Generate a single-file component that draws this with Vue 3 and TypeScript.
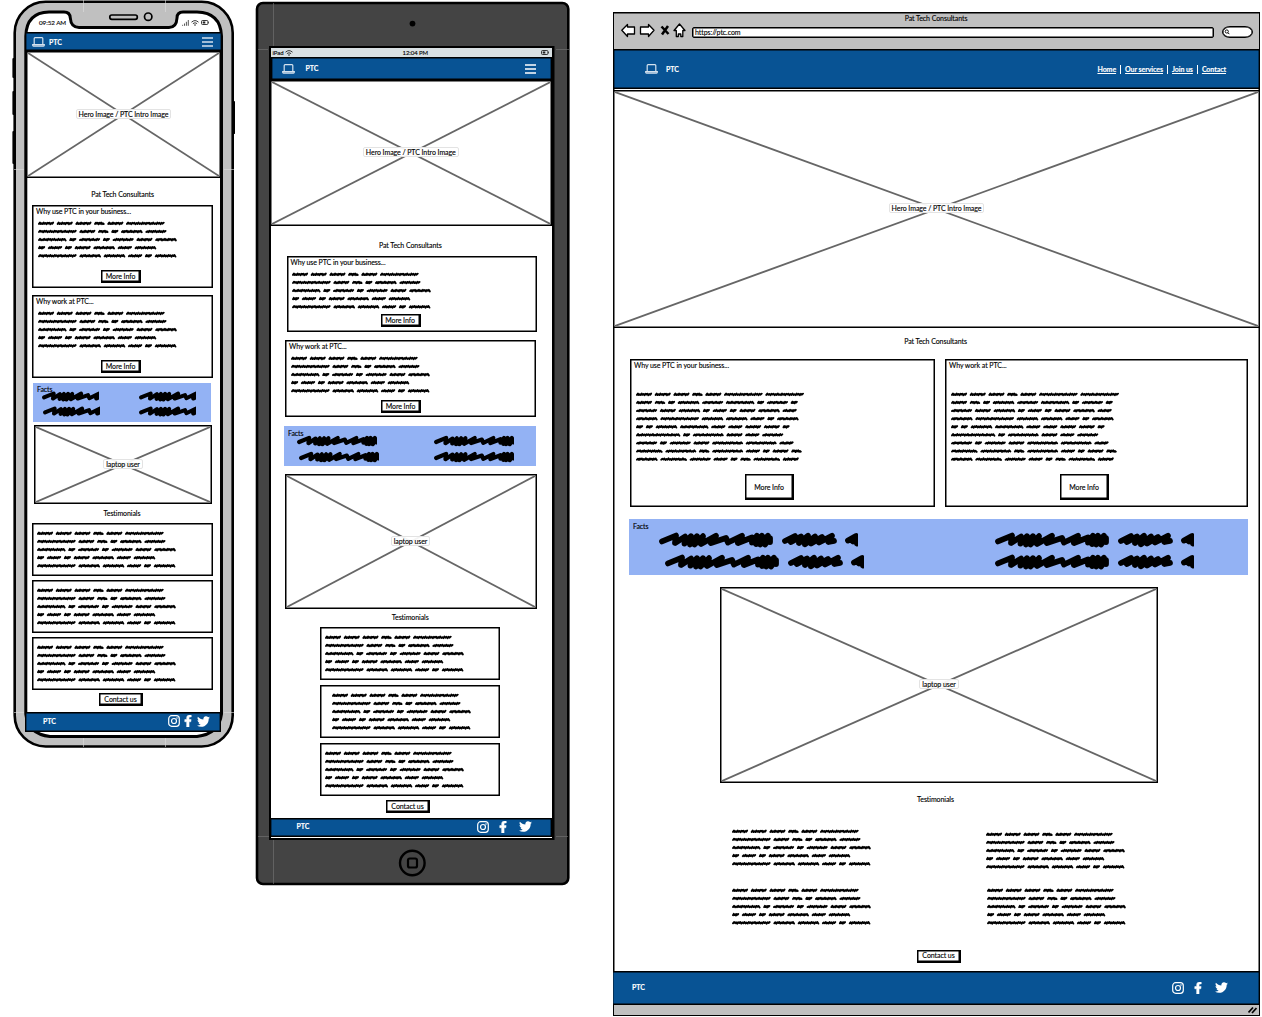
<script setup lang="ts">
type WordKey = 'A' | 'B' | 'C' | 'D' | 'E' | 'F' | 'G' | 'H' | 'I' | 'J' | 'K'

const wordWidths: Record<WordKey, number> = {
  A: 16.1, B: 10.6, C: 38.7, D: 7.2, E: 21.7, F: 21.2, G: 28.6, H: 14.4, I: 44.4, J: 31, K: 26.7,
}
const GAP = 2.6
const PITCH = 8.1

const shortCopy = ['AAABAC', 'CABDEF', 'GDFDFAE', 'DHDAEHE', 'CEEHDE']
const longCopy = [
  'AAABACC', 'ABDEFGDFD', 'FAEDHDAEH', 'ECEEHDE', 'DDEGHHAAD',
  'IDJAHF', 'FDFAJJH', 'KJBJHDAB', 'EKFHDBKA',
]

// Builds the squiggle strokes that stand in for body copy.
function scribble(lines: string[]): string {
  let d = ''
  lines.forEach((line, row) => {
    let x = 0
    const y = 3.4 + row * PITCH
    for (const key of line) {
      const w = wordWidths[key as WordKey]
      const steps = Math.max(4, Math.round(w / 1.1))
      const dx = (w - 2) / steps
      d += `M${(x + 1).toFixed(2)} ${(y + 0.5).toFixed(2)}`
      for (let i = 1; i <= steps; i++) {
        const amp = 0.1 + 0.75 * Math.abs(Math.sin(i * 0.9 + w))
        const dy = i % 2 ? -amp : amp
        d += `L${(x + 1 + dx * i).toFixed(2)} ${(y + dy).toFixed(2)}`
      }
      x += w + GAP
    }
  })
  return d
}

const shortPath = scribble(shortCopy)
const longPath = scribble(longCopy)

const factRows = [0, 1]
const testimonials = [0, 1, 2]
const links = ['Home', 'Our services', 'Join us', 'Contact']
const cards = ['Why use PTC in your business...', 'Why work at PTC...']
</script>

<template>
  <main class="canvas">
    <svg class="defs" width="0" height="0" aria-hidden="true">
      <symbol id="laptop" viewBox="0 0 13 10">
        <path d="M2.2 7V1.6q0-.9.9-.9h6.8q.9 0 .9.9V7M.7 7.6h11.6v.7q0 .8-.8.8h-10q-.8 0-.8-.8z" fill="none" stroke="#d5e2ee" stroke-width="1.2" />
      </symbol>
      <symbol id="instagram" viewBox="0 0 12 12">
        <rect x=".7" y=".7" width="10.6" height="10.6" rx="3" fill="none" stroke="#fff" stroke-width="1.2" />
        <circle cx="6" cy="6" r="2.5" fill="none" stroke="#fff" stroke-width="1.2" />
        <circle cx="9" cy="3" r=".75" fill="#fff" />
      </symbol>
      <symbol id="facebook" viewBox="0 0 320 512">
        <path fill="#fff" stroke="#fff" stroke-width="24" d="M279.14 288l14.22-92.66h-88.91v-60.13c0-25.35 12.42-50.06 52.24-50.06h40.42V6.26S260.43 0 225.36 0c-73.22 0-121.08 44.38-121.08 124.72v70.62H22.89V288h81.39v224h100.17V288z" />
      </symbol>
      <symbol id="twitter" viewBox="0 0 512 512">
        <path fill="#fff" d="M459.37 151.716c.325 4.548.325 9.097.325 13.645 0 138.72-105.583 298.558-298.558 298.558-59.452 0-114.68-17.219-161.137-47.106 8.447.974 16.568 1.299 25.34 1.299 49.055 0 94.213-16.568 130.274-44.832-46.132-.975-84.792-31.188-98.112-72.772 6.498.974 12.995 1.624 19.818 1.624 9.421 0 18.843-1.3 27.614-3.573-48.081-9.747-84.143-51.98-84.143-102.985v-1.299c13.969 7.797 30.214 12.67 47.431 13.319-28.264-18.843-46.781-51.005-46.781-87.391 0-19.492 5.197-37.36 14.294-52.954 51.655 63.675 129.3 105.258 216.365 109.807-1.624-7.797-2.599-15.918-2.599-24.04 0-57.828 46.782-104.934 104.934-104.934 30.213 0 57.502 12.67 76.67 33.137 23.715-4.548 46.456-13.32 66.599-25.34-7.798 24.366-24.366 44.833-46.132 57.827 21.117-2.273 41.584-8.122 60.426-16.243-14.292 20.791-32.161 39.308-52.628 54.253z" />
      </symbol>
      <symbol id="wifi" viewBox="0 0 8 6">
        <path d="M.5 2.2Q4-1 7.5 2.2M1.9 3.6q2.1-1.7 4.2 0" fill="none" stroke="#222" stroke-width=".9" />
        <circle cx="4" cy="5" r=".8" fill="#222" />
      </symbol>
      <symbol id="battery" viewBox="0 0 8 5">
        <rect x=".5" y=".5" width="6.4" height="4" rx="1" fill="none" stroke="#222" stroke-width=".9" />
        <path d="M1.7 1.5h2.6v2H1.7zM7.2 1.7h.7v1.6h-.7z" fill="#222" />
      </symbol>
      <symbol id="marker" viewBox="0 0 200 16" overflow="hidden">
        <path d="M3 9.400L17 3.600 16 11 26 4.600 25.500 11.500 32 4.200 31 12.500 38 4.200 35.500 12.500 44 4.200 42 12 57 3.800 52 11 67 6 69 10.500 83 3.800 79 11 93 5.500 93 10.500 98 3.800 97 12 103 3.800 101 12.500 109 3.800 106 12.500 111 6 111 10" />
        <path d="M126 9L136 4 132 10 142 4.500 140 11 149 3.800 146 12.300 156 4.500 152 11.500 163 5 160 10.500 173 3.800 169.500 10 175 9" />
        <path d="M189 8.500L197 4 194 9.500 200 6 198 11.500 202 10" />
      </symbol>
    </svg>

    <!-- Phone -->
    <section class="device phone">
      <svg class="shell" width="223" height="750" viewBox="12 0 223 750">
        <path d="M13.500 59v18M13.500 92v22M13.500 132v31M234 102v31" stroke="#000" stroke-width="2.200" stroke-linecap="round" />
        <rect x="14.700" y="1.800" width="218" height="744.700" rx="31" fill="#c0c0c0" stroke="#000" stroke-width="2.600" />
        <path d="M25.800 36Q26.500 12.500 49 12H64Q70 12 70.300 18Q71 27.500 79 27.500H169Q176.500 27.500 177 18Q177 12 183 12H197Q220.500 12.500 221.500 36V714Q219 734 197 736.500H50Q28 734 25.800 714Z" fill="#fff" stroke="#000" stroke-width="3" />
        <path d="M83.500 0V12M165.500 0V12M83.500 738v9M165.500 738v9M14 169.500h10M224 169.500h10M14 712.500h10M224 712.500h10" stroke="#ddd" stroke-width=".6" />
        <rect x="109.800" y="15" width="27.500" height="4.300" rx="2" fill="#c0c0c0" stroke="#000" stroke-width="1.700" />
        <circle cx="148.200" cy="16.700" r="3.700" fill="#c0c0c0" stroke="#000" stroke-width="1.700" />
      </svg>
      <div class="screen">
        <div class="status">
          <span class="clock">09:52 AM</span>
          <span class="signals">
            <svg width="7" height="6" viewBox="0 0 7 6"><path d="M.6 5.800V4.800M2.500 5.800V3.500M4.400 5.800V1.800M6.300 5.800V0" stroke="#444" stroke-width=".9" /></svg>
            <svg width="8" height="6"><use href="#wifi" /></svg>
            <svg width="8" height="5"><use href="#battery" /></svg>
          </span>
        </div>
        <header class="bar">
          <svg class="logo" width="13" height="10"><use href="#laptop" /></svg>
          <strong>PTC</strong>
          <svg class="burger" width="11" height="10" viewBox="0 0 11 10"><path d="M0 1h11M0 5h11M0 9h11" stroke="#d5e2ee" stroke-width="1.400" /></svg>
        </header>
        <figure class="picture hero">
          <svg class="cross"><line x1="0" y1="0" x2="100%" y2="100%" /><line x1="100%" y1="0" x2="0" y2="100%" /></svg>
          <figcaption>Hero Image / PTC Intro Image</figcaption>
        </figure>
        <h1 class="t-title">Pat Tech Consultants</h1>
        <article v-for="title in cards" :key="title" class="card">
          <h2>{{ title }}</h2>
          <svg class="copy" width="142" height="38"><path :d="shortPath" /></svg>
          <button>More Info</button>
        </article>
        <div class="facts">
          <h2>Facts</h2>
          <div v-for="row in factRows" :key="row" class="fact-row">
            <svg class="marker" viewBox="0 0 83 16"><use href="#marker" width="200" height="16" /></svg>
            <svg class="marker" viewBox="0 0 83 16"><use href="#marker" width="200" height="16" /></svg>
          </div>
        </div>
        <figure class="picture laptop">
          <svg class="cross"><line x1="0" y1="0" x2="100%" y2="100%" /><line x1="100%" y1="0" x2="0" y2="100%" /></svg>
          <figcaption>laptop user</figcaption>
        </figure>
        <h1 class="t-test">Testimonials</h1>
        <article v-for="n in testimonials" :key="n" class="quote">
          <svg class="copy" width="142" height="38"><path :d="shortPath" /></svg>
        </article>
        <button class="contact">Contact us</button>
        <footer class="bar">
          <strong>PTC</strong>
          <svg class="ig" width="12" height="12"><use href="#instagram" /></svg>
          <svg class="fb" width="8" height="12"><use href="#facebook" /></svg>
          <svg class="tw" width="13" height="13"><use href="#twitter" /></svg>
        </footer>
      </div>
    </section>

    <!-- Tablet -->
    <section class="device tablet">
      <svg class="shell" width="315" height="885" viewBox="255 1 315 885">
        <rect x="257" y="3" width="311.300" height="881" rx="6" fill="#444" stroke="#000" stroke-width="2.600" />
        <path d="M273.500 3V46M258 49.500h10M556 49.500h13M258 836.500h11M556 836.500h12M273.500 840v44" stroke="#777" stroke-width=".6" />
        <circle cx="412.500" cy="23.600" r="2.900" />
        <rect x="269" y="46" width="285.500" height="794" />
        <circle cx="412.300" cy="863" r="12.300" fill="none" stroke="#000" stroke-width="2.400" />
        <rect x="408" y="858.500" width="9" height="9" rx="1.800" fill="none" stroke="#000" stroke-width="2.200" />
      </svg>
      <div class="screen">
        <div class="status">
          <span>iPad</span>
          <svg width="8" height="6"><use href="#wifi" /></svg>
          <span class="clock">12:04 PM</span>
          <svg class="cell" width="8" height="5"><use href="#battery" /></svg>
        </div>
        <header class="bar">
          <svg class="logo" width="13" height="10"><use href="#laptop" /></svg>
          <strong>PTC</strong>
          <svg class="burger" width="11" height="10" viewBox="0 0 11 10"><path d="M0 1h11M0 5h11M0 9h11" stroke="#fff" stroke-width="1.300" /></svg>
        </header>
        <figure class="picture hero">
          <svg class="cross"><line x1="0" y1="0" x2="100%" y2="100%" /><line x1="100%" y1="0" x2="0" y2="100%" /></svg>
          <figcaption>Hero Image / PTC Intro Image</figcaption>
        </figure>
        <h1 class="t-title">Pat Tech Consultants</h1>
        <article v-for="title in cards" :key="title" class="card">
          <h2>{{ title }}</h2>
          <svg class="copy" width="142" height="38"><path :d="shortPath" /></svg>
          <button>More Info</button>
        </article>
        <div class="facts">
          <h2>Facts</h2>
          <div v-for="row in factRows" :key="row" class="fact-row">
            <svg class="marker" viewBox="0 0 112 16"><use href="#marker" width="200" height="16" /></svg>
            <svg class="marker" viewBox="0 0 112 16"><use href="#marker" width="200" height="16" /></svg>
          </div>
        </div>
        <figure class="picture laptop">
          <svg class="cross"><line x1="0" y1="0" x2="100%" y2="100%" /><line x1="100%" y1="0" x2="0" y2="100%" /></svg>
          <figcaption>laptop user</figcaption>
        </figure>
        <h1 class="t-test">Testimonials</h1>
        <article v-for="n in testimonials" :key="n" class="quote">
          <svg class="copy" width="142" height="38"><path :d="shortPath" /></svg>
        </article>
        <button class="contact">Contact us</button>
        <footer class="bar">
          <strong>PTC</strong>
          <svg class="ig" width="12" height="12"><use href="#instagram" /></svg>
          <svg class="fb" width="8" height="12"><use href="#facebook" /></svg>
          <svg class="tw" width="13" height="13"><use href="#twitter" /></svg>
        </footer>
      </div>
    </section>

    <!-- Browser window -->
    <section class="device browser">
      <div class="chrome">
        <div class="window-title t-title">Pat Tech Consultants</div>
        <div class="tools">
          <svg width="66" height="15" viewBox="0 0 66 15">
            <g fill="#fff" stroke="#000" stroke-width="1.300" stroke-linejoin="round">
              <path d="M.8 7.300L6.500 1.500V4H13.500V11H6.500V13.500Z" />
              <path d="M33 7.300L27.500 1.500V4H19.500V11H27.500V13.500Z" />
              <path d="M58.500 1L64 7.500H61.800V13.500H59.800V11H57.300V13.500H55.300V7.500H53Z" />
            </g>
            <path d="M40.500 3.500L47.500 11M47 3L41 11.500" stroke="#000" stroke-width="2.500" />
          </svg>
          <div class="url">https://ptc.com</div>
          <div class="search"><svg width="6" height="6" viewBox="0 0 6 6"><circle cx="2.800" cy="2.500" r="1.600" fill="none" stroke="#000" stroke-width=".9" /><path d="M4 3.800L5.400 5.200" stroke="#000" /></svg></div>
        </div>
      </div>
      <header class="bar">
        <svg class="logo" width="13" height="10"><use href="#laptop" /></svg>
        <strong>PTC</strong>
        <nav>
          <a v-for="link in links" :key="link"><span>{{ link }}</span></a>
        </nav>
      </header>
      <figure class="picture hero">
        <svg class="cross"><line x1="0" y1="0" x2="100%" y2="100%" /><line x1="100%" y1="0" x2="0" y2="100%" /></svg>
        <figcaption>Hero Image / PTC Intro Image</figcaption>
      </figure>
      <h1 class="t-title">Pat Tech Consultants</h1>
      <div class="cards">
        <article v-for="title in cards" :key="title" class="card">
          <h2>{{ title }}</h2>
          <svg class="copy" width="170" height="72"><path :d="longPath" /></svg>
          <button>More Info</button>
        </article>
      </div>
      <div class="facts">
        <h2>Facts</h2>
        <div v-for="row in factRows" :key="row" class="fact-row">
          <svg class="marker" viewBox="0 0 199 16"><use href="#marker" width="200" height="16" /></svg>
          <svg class="marker" viewBox="0 0 199 16"><use href="#marker" width="200" height="16" /></svg>
        </div>
      </div>
      <figure class="picture laptop">
        <svg class="cross"><line x1="0" y1="0" x2="100%" y2="100%" /><line x1="100%" y1="0" x2="0" y2="100%" /></svg>
        <figcaption>laptop user</figcaption>
      </figure>
      <h1 class="t-test">Testimonials</h1>
      <div class="quotes">
        <svg v-for="n in 4" :key="n" class="copy" width="142" height="38"><path :d="shortPath" /></svg>
      </div>
      <button class="contact">Contact us</button>
      <footer class="bar">
        <strong>PTC</strong>
        <svg class="ig" width="12" height="12"><use href="#instagram" /></svg>
        <svg class="fb" width="8" height="12"><use href="#facebook" /></svg>
        <svg class="tw" width="13" height="13"><use href="#twitter" /></svg>
      </footer>
      <div class="grip"><svg width="9" height="8" viewBox="0 0 9 8"><path d="M.5 6.500L5 1.500M4 7L8.500 2" stroke="#000" stroke-width="1.700" /></svg></div>
    </section>
  </main>
</template>

<style>
body { background: #fff; overflow: hidden; }
</style>

<style scoped>
* { box-sizing: border-box; }
.canvas {
  position: relative;
  width: 1262px;
  height: 1017px;
  background: #fff;
  overflow: hidden;
  color: #000;
  font: 7px/9px Lato, "Liberation Sans", sans-serif;
  letter-spacing: -0.07px;
  -webkit-text-stroke: 0.12px currentColor;
}
svg { display: block; flex: none; }
.defs { position: absolute; }
.device { position: absolute; white-space: nowrap; }
.shell { position: absolute; left: 0; top: 0; }
.screen { position: relative; display: flex; flex-direction: column; }
.screen > * { flex: none; }
h1, h2 { margin: 0; font-size: inherit; font-weight: 400; line-height: 9px; }
h1 { text-align: center; }
figure { margin: 0; }

.bar {
  display: flex;
  align-items: center;
  background: #085394;
  border: 1px solid #000;
  box-shadow: inset 0 0 0 0.4px #000;
  color: #fff;
}
.picture {
  display: grid;
  grid-template: 100% / 100%;
  place-items: center;
  border: 1px solid #000;
  box-shadow: inset 0 0 0 0.5px #000;
  background: #fff;
}
.cross {
  grid-area: 1 / 1;
  width: calc(100% - 2px);
  height: calc(100% - 2px);
  stroke: #666;
  stroke-width: 1.8;
}
.picture figcaption {
  grid-area: 1 / 1;
  height: 10px;
  margin-bottom: 2px;
  padding: 0 2px;
  border: 1px solid #e3e3e3;
  border-radius: 2px;
  background: rgba(255, 255, 255, 0.93);
  line-height: 8px;
  z-index: 1;
}
.copy path { fill: none; stroke: #000; stroke-width: 1.9; stroke-linejoin: round; stroke-linecap: round; }
.card, .quote { border: 1px solid #000; box-shadow: inset 0 0 0 0.5px #000; background: #fff; }
.card { display: flex; flex-direction: column; align-items: flex-start; padding: 1px 0 0 3px; }
button {
  width: 40px;
  height: 13px;
  margin: 0;
  padding: 0;
  border: solid #000;
  border-width: 1px 2px 2px 1px;
  box-shadow: inset 0 0 0 0.5px #000;
  background: #fff;
  color: #000;
  font: inherit;
  letter-spacing: inherit;
  line-height: 9px;
  text-align: center;
}
.contact { width: 44px; height: 13px; }
.facts { background: #93b2f4; }
#marker path { fill: none; stroke: #000; stroke-width: 5.8; stroke-linejoin: round; stroke-linecap: round; }
.marker { overflow: hidden; }
.fact-row { display: flex; }

/* phone */
.phone { left: 12px; top: 0; width: 223px; height: 750px; }
.phone .screen { margin: 11px 0 0 13px; width: 197px; }
.phone .status { display: flex; height: 21px; padding: 7px 13px 0 14px; justify-content: space-between; font-size: 6.3px; }
.phone .signals { display: flex; align-items: center; gap: 2px; height: 9px; }
.phone header { height: 19px; padding: 0 8px 0 6px; }
.phone header strong { margin: 1px 0 0 4px; }
.burger { margin-left: auto; }
.phone .hero { width: 195px; margin-left: 1px; height: 127px; }
.phone .t-title { margin: 12px 2px 6px 0; }
.phone .card { width: 181px; height: 83px; margin: 0 0 7px 7px; }
.phone .card + .card { margin-bottom: 5px; }
.card .copy { margin: 4px 0 0 1.5px; }
.phone .card button { margin: 12px 0 0 65px; }
.phone .facts { width: 178px; height: 39px; margin: 0 0 3px 8px; padding: 2px 0 0 4px; }
.phone .facts h2 { height: 4px; }
.phone .fact-row { height: 15px; padding-left: 5px; gap: 40px; }
.phone .fact-row + .fact-row { padding-left: 6px; gap: 39px; }
.phone .marker { width: 57px; height: 15px; }
.phone .laptop { width: 178px; height: 79px; margin-left: 9px; }
.phone .t-test { margin: 5px 3px 5px 0; }
.quote { height: 53px; }
.phone .quote { width: 181px; margin: 0 0 4px 7px; padding: 6px 0 0 4px; }
.phone .contact { margin: -1px 0 6px 74px; }
.phone footer { height: 20px; padding: 0 10px 2px 17px; width: 196px; }
.ig { margin-left: auto; }
.phone .fb { margin-left: 4px; }
.phone .tw { margin-left: 5px; }

/* tablet */
.tablet { left: 255px; top: 1px; width: 315px; height: 885px; }
.tablet .screen { margin: 47px 0 0 15.5px; width: 281.5px; height: 790px; background: #fff; }
.tablet .status { display: flex; align-items: center; height: 9px; padding: 0 3px 0 2px; background: #d9e0e3; font-size: 6px; }
.tablet .status svg { margin-left: 2px; }
.tablet .status .clock { margin-left: 109px; }
.tablet .status svg.cell { margin-left: auto; }
.tablet header { height: 23px; padding: 0 15px 0 10px; }
.tablet header strong { margin-left: 11px; }
.tablet .hero { height: 146px; margin: 0 0 0 -1px; }
.tablet .t-title { margin: 15px 2px 6px 0; }
.tablet .card { width: 250px; height: 76px; margin: 0 0 8px 16px; }
.tablet .card + .card { width: 251px; height: 77px; margin: 0 0 9px 14.5px; }
.tablet .card button { margin: 5px 0 0 90px; }
.tablet .card + .card button { margin: 7px 0 0 92px; }
.tablet .facts { width: 252px; height: 40px; margin: 0 0 8px 13.5px; padding: 3px 0 0 4px; }
.tablet .facts h2 { height: 4px; }
.tablet .fact-row { height: 16px; padding-left: 9px; gap: 57px; }
.tablet .fact-row + .fact-row { padding-left: 11px; gap: 55px; }
.tablet .marker { width: 80px; height: 16px; }
.tablet .laptop { width: 252px; height: 135px; margin-left: 14px; }
.tablet .t-test { margin: 4px 2px 5px 0; }
.tablet .quote { width: 180px; margin: 0 0 5px 49.5px; padding: 6px 0 0 4px; }
.tablet .quote:nth-of-type(4) { padding-left: 11px; }
.tablet .contact { margin: -1px 0 5px 115.5px; }
.tablet footer { height: 19px; padding: 0 19px 2px 26px; margin: 0 0 0 -1px; }
.tablet .fb { margin-left: 10px; }
.tablet .tw { margin-left: 12px; }

/* browser */
.browser {
  left: 613px;
  top: 12px;
  width: 647px;
  height: 1004px;
  display: flex;
  flex-direction: column;
  border: 1px solid #000;
  box-shadow: inset 0 0 0 0.5px #000;
  background: #fff;
}
.chrome { height: 36px; padding: 1px 6px 0 7px; background: #c0c0c0; box-shadow: inset 0 0.5px #000; }
.window-title { text-align: center; height: 9px; }
.tools { display: flex; align-items: center; height: 16px; }
.tools > svg { margin-top: -2px; }
.url { width: 524px; height: 11px; margin: 2px 0 0 5px; padding-left: 2px; border: 1px solid #000; box-shadow: inset 0 0 0 0.5px #000; border-radius: 2px; background: #fff; line-height: 8px; }
.search { width: 31px; height: 12px; margin: 2px 0 0 8px; padding: 2px 1px; border: 1px solid #000; box-shadow: inset 0 0 0 0.5px #000; border-radius: 8px / 6px; background: #fff; }
.browser header { height: 40px; padding: 0 33px 0 31px; border-width: 1px 0; }
.browser header strong { margin-left: 8px; }
nav { display: flex; margin-left: auto; font-weight: 700; }
nav span { text-decoration: underline; }
nav a + a { margin-left: 4px; padding-left: 4px; border-left: 1px solid #fff; }
.browser .hero { height: 238px; margin: 1px -1px 0; }
.browser .t-title { padding-right: 2px; }
.browser h1.t-title { margin: 9px 0 13px; }
.cards { display: flex; gap: 10px; padding: 0 11px 0 16px; }
.browser .card { width: 305px; height: 148px; }
.browser .card + .card { width: 303px; }
.browser .card .copy { margin: 21px 0 0 2px; }
.browser .card button { width: 49px; height: 26px; margin: 11px 0 0 111px; line-height: 22px; }
.browser .facts { width: 619px; height: 56px; margin: 12px 0 12px 15px; padding: 3px 0 0 4px; }
.browser .facts h2 { height: 10px; }
.browser .fact-row { height: 21.5px; padding-left: 26px; gap: 137px; }
.browser .fact-row + .fact-row { padding-left: 32px; gap: 131px; }
.browser .marker { width: 199px; height: 16px; }
.browser .laptop { width: 438px; height: 196px; margin-left: 106px; }
.browser .t-test { margin: 12px 0 0; padding-right: 2px; }
.quotes { display: grid; grid-template: 58.5px 60px / 255px 255px; margin: 24px 0 0 117.5px; }
.quotes .copy:nth-child(2) { margin: 3px 0 0 -1px; }
.browser .contact { margin: 3px 0 8px 303px; }
.browser footer { height: 34px; padding: 0 31px 0 19px; margin: 0 0 0 -1px; border-width: 1px 0; }
.browser .fb { margin-left: 10px; }
.browser .tw { margin-left: 13px; }
.grip { flex: 1; display: flex; justify-content: flex-end; padding: 1px 2px 0 0; background: #c0c0c0; }
</style>
